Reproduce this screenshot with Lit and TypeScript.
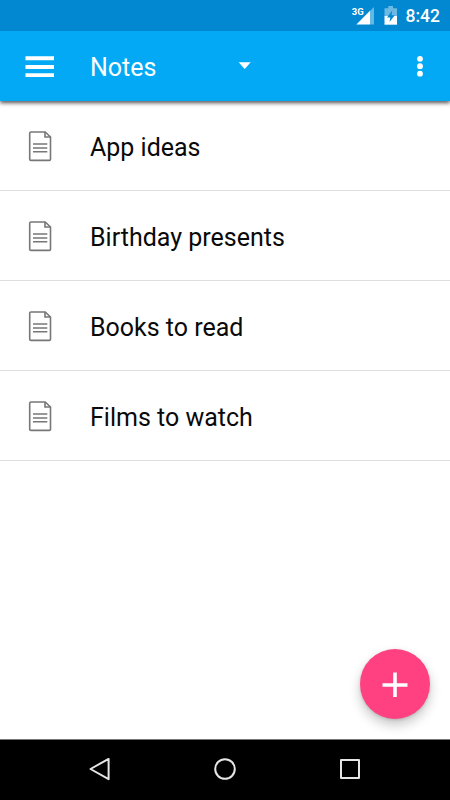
import { LitElement, html, css } from "lit";
import { customElement } from "lit/decorators.js";

@customElement("app-root")
export class AppRoot extends LitElement {
  static styles = css`
    :host {
      display: flex;
      flex-direction: column;
      position: relative;
      width: 100%;
      height: 100vh;
      overflow: hidden;
      background: #fff;
      color: #0a0a0a;
      font-family: Roboto, "Liberation Sans", sans-serif;
    }
    svg { display: block; flex: none; }
    .status {
      display: flex;
      justify-content: flex-end;
      align-items: center;
      box-sizing: border-box;
      height: 31px;
      padding-right: 10px;
      background: #0288d1;
      color: #fff;
    }
    .clock {
      font-size: 17.5px;
      font-weight: 500;
      line-height: 31px;
      margin-left: 7px;
      padding-top: 2px;
    }
    .net {
      font-size: 9.5px;
      font-weight: 700;
    }
    .bar {
      display: flex;
      align-items: center;
      height: 70px;
      background: #03a9f4;
      color: #fff;
      box-shadow: 0 2px 4px rgba(0, 0, 0, 0.68);
      clip-path: inset(0 0 -10px 0);
      z-index: 1;
    }
    .menu { margin-left: 25px; }
    .title {
      width: 148px;
      margin-left: 36px;
      padding-top: 4px;
      font-size: 25px;
      line-height: 30px;
    }
    .more { margin-left: auto; margin-right: 25px; }
    .list {
      flex: 1;
      margin: 0;
      padding: 0;
      list-style: none;
    }
    .row {
      display: flex;
      align-items: center;
      box-sizing: border-box;
      height: 90px;
      padding-left: 28px;
      border-bottom: 1px solid #dedede;
    }
    .label {
      margin-left: 38px;
      padding-top: 4px;
      font-size: 25px;
      line-height: 30px;
    }
    .fab {
      position: absolute;
      right: 20px;
      bottom: 81px;
      width: 70px;
      height: 70px;
      padding: 0;
      border: 0;
      border-radius: 50%;
      background: #ff4081;
      box-shadow: 0 6px 12px rgba(0, 0, 0, 0.22), 0 1px 3px rgba(0, 0, 0, 0.14);
    }
    .nav {
      display: flex;
      justify-content: center;
      gap: 101px;
      align-items: center;
      box-sizing: border-box;
      height: 61px;
      border-top: 1px solid #777;
      background: #000;
      z-index: 1;
    }
  `;

  private notes = ["App ideas", "Birthday presents", "Books to read", "Films to watch"];

  render() {
    return html`
      <div class="status">
        <svg width="50" height="31" viewBox="349 0 50 31">
          <path d="M374 7V24.500H370V11z" fill="#fff" opacity=".4" />
          <path d="M370 10.800V24.500H356.300Z" fill="#fff" />
          <text class="net" x="351.700" y="15" fill="#fff" textLength="12">3G</text>
          <path d="M388.300 6h4.700v2.200h4v7.800h-12.500V8.200h3.800z" fill="#fff" opacity=".42" />
          <path d="M384.500 16h12.500v8.700h-12.500z" fill="#fff" />
          <path d="M392.300 10.500l-5.300 7h3.300l-.8 4.500 5.300-6.800h-3.300z" fill="#0288d1" />
        </svg>
        <span class="clock">8:42</span>
      </div>
      <header class="bar">
        <svg class="menu" width="29" height="22" viewBox="0 0 29 22">
          <path d="M.5 1.300h28.500v4H.5zM.5 10h28.500v4H.5zM.5 18.300h28.500v3.700H.5z" fill="#fff" />
        </svg>
        <span class="title">Notes</span>
        <svg width="14" height="10" viewBox="0 0 14 10"><path d="M.7 1.300h12L6.700 8z" fill="#fff" /></svg>
        <svg class="more" width="10" height="24" viewBox="0 0 10 24" fill="#fff">
          <circle cx="5" cy="4.800" r="2.900" />
          <circle cx="5" cy="12.200" r="2.900" />
          <circle cx="5" cy="19.700" r="2.900" />
        </svg>
      </header>
      <ul class="list">
        ${this.notes.map(
          (note) => html`
            <li class="row">
              <svg width="24" height="32" viewBox="0 0 24 32" fill="none" stroke="#777" stroke-width="1.600">
                <path d="M3 2H17.200L22.500 7V29.200Q22.500 30.400 21.300 30.400H3Q1.700 30.400 1.700 29.200V3.300Q1.700 2 3 2Z" />
                <path d="M17 2V7H22.500" />
                <path d="M5 14H19.300M5 18H19.300M5 21.800H19.300" />
              </svg>
              <span class="label">${note}</span>
            </li>
          `
        )}
      </ul>
      <button class="fab" aria-label="Add note">
        <svg width="70" height="70" viewBox="0 0 70 70">
          <path d="M33.200 23.500h3.600v10.800h10.700v3.500H36.800V48h-3.600V37.800H22.500v-3.500h10.700z" fill="#fff" />
        </svg>
      </button>
      <nav class="nav">
        <svg width="24" height="24" viewBox="0 0 24 24" fill="none" stroke="#e6e6e6" stroke-width="2" stroke-linejoin="round">
          <path d="M2.500 11L20.600 .9V21.200Z" />
        </svg>
        <svg width="24" height="24" viewBox="0 0 24 24" fill="none" stroke="#e6e6e6" stroke-width="2">
          <circle cx="12" cy="11" r="9.800" />
        </svg>
        <svg width="24" height="24" viewBox="0 0 24 24" fill="none" stroke="#e6e6e6" stroke-width="2" stroke-linejoin="round">
          <path d="M3 2H21V20H3Z" />
        </svg>
      </nav>
    `;
  }
}
